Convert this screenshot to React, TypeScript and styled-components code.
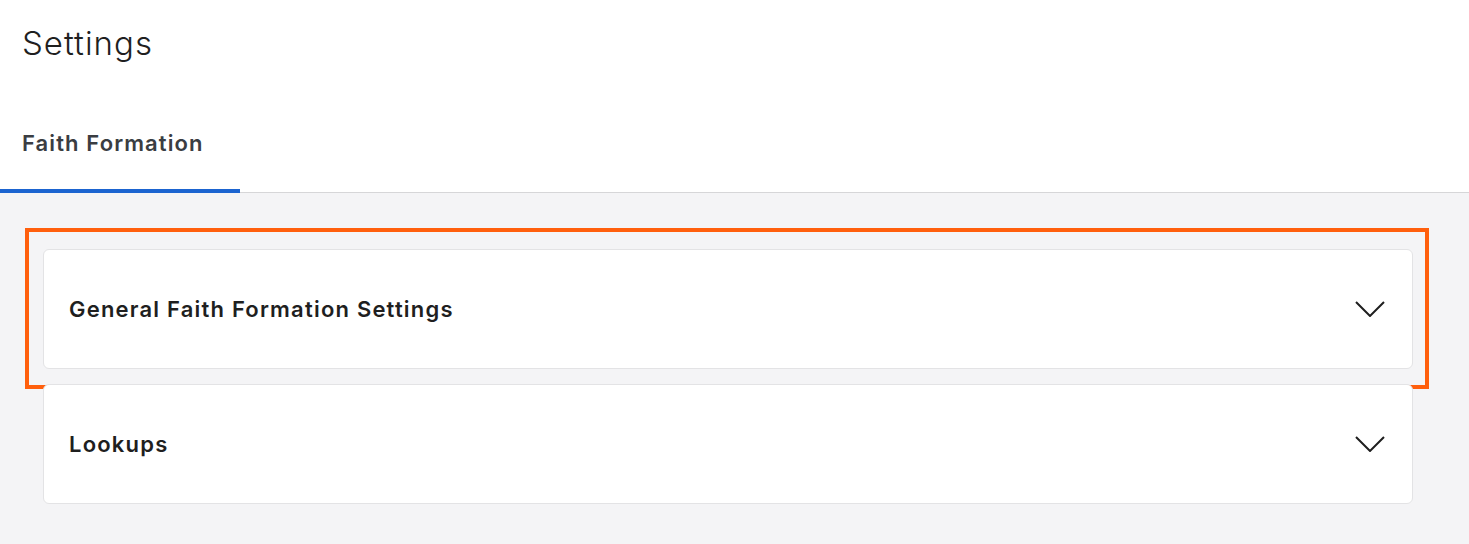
import React from 'react';
import styled, { createGlobalStyle } from 'styled-components';

const GlobalStyle = createGlobalStyle`
  html, body {
    margin: 0;
    padding: 0;
    background: #f4f4f6;
    font-family: Inter, "Noto Sans", sans-serif;
  }
`;

const Page = styled.div`
  display: flex;
  flex-direction: column;
  min-height: 100vh;
  background: #f4f4f6;
`;

const Header = styled.header`
  background: #ffffff;
  padding-top: 23px;
  border-bottom: 1px solid #d6d6d8;
`;

const Title = styled.h1`
  margin: 0 0 0 22px;
  font-size: 33px;
  line-height: 40px;
  font-weight: 300;
  letter-spacing: 1px;
  color: #1f1f1f;
`;

const TabList = styled.div`
  display: flex;
  margin-top: 68px;
`;

const Tab = styled.button<{ $active?: boolean }>`
  font-family: inherit;
  background: none;
  border: none;
  width: 240px;
  text-align: left;
  padding: 0 0 34px 22px;
  margin-bottom: -1px;
  border-bottom: 4px solid ${(p) => (p.$active ? '#1b64d0' : 'transparent')};
  font-size: 22px;
  line-height: 24px;
  font-weight: 600;
  letter-spacing: 1.1px;
  color: #3a3d42;
  cursor: pointer;
`;

const Content = styled.main`
  flex: 1;
  display: flex;
  flex-direction: column;
  gap: 15px;
  padding: 56px 56px 40px 43px;
`;

const Card = styled.section`
  position: relative;
  display: flex;
  align-items: center;
  justify-content: space-between;
  height: 120px;
  box-sizing: border-box;
  padding: 0 27px 0 25px;
  background: #ffffff;
  border: 1px solid #e3e3e5;
  border-radius: 6px;
`;

const CardTitle = styled.h2`
  margin: 0;
  font-size: 22px;
  line-height: 24px;
  font-weight: 600;
  letter-spacing: 1.2px;
  color: #1f1f1f;
`;

const Highlight = styled.div`
  position: absolute;
  top: -22px;
  left: -19px;
  right: -17px;
  bottom: -21px;
  border: 4px solid #ff5f0d;
  pointer-events: none;
`;

const Chevron = () => (
  <svg width="30" height="16" viewBox="0 0 30 16" fill="none">
    <path d="M1 1 L15 15 L29 1" stroke="#1f1f1f" strokeWidth="2" />
  </svg>
);

const sections = [
  { title: 'General Faith Formation Settings', highlighted: true },
  { title: 'Lookups', highlighted: false },
];

const App: React.FC = () => {
  return (
    <Page>
      <GlobalStyle />
      <Header>
        <Title>Settings</Title>
        <TabList>
          <Tab $active>Faith Formation</Tab>
        </TabList>
      </Header>
      <Content>
        {sections.map((s) => (
          <Card key={s.title}>
            <CardTitle>{s.title}</CardTitle>
            <Chevron />
            {s.highlighted && <Highlight />}
          </Card>
        ))}
      </Content>
    </Page>
  );
};

export default App;
